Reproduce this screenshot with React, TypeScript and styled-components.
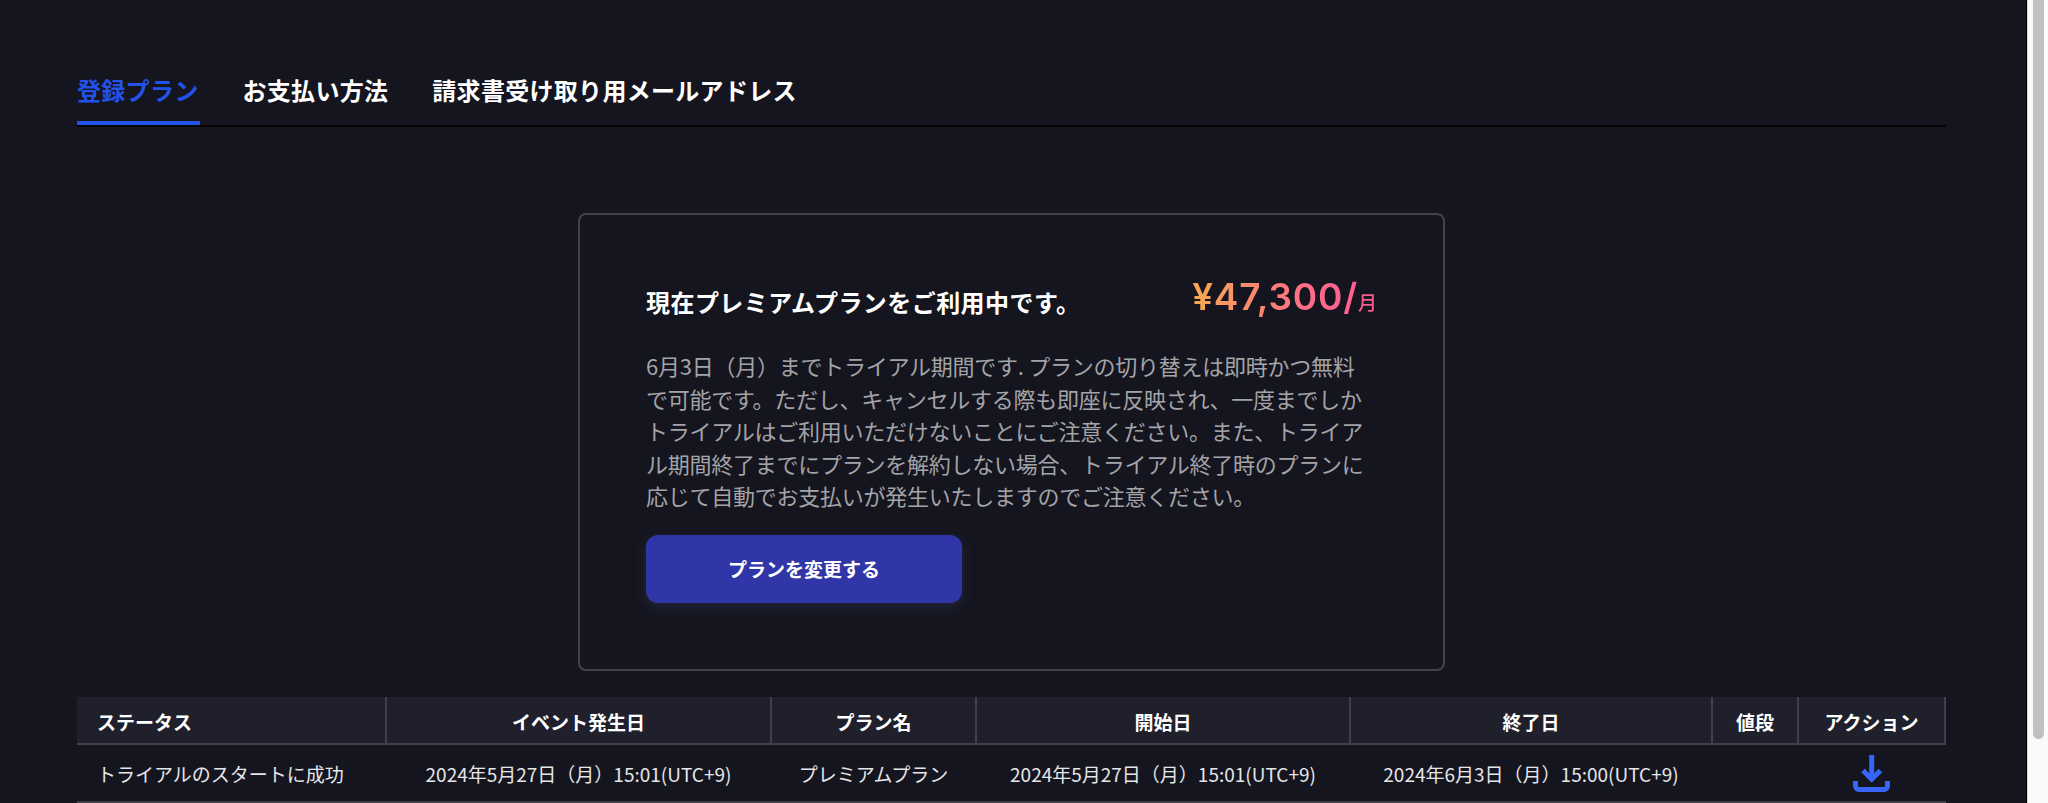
import styled, { createGlobalStyle } from "styled-components";

const GlobalStyle = createGlobalStyle`
  html, body {
    margin: 0;
    padding: 0;
    height: 100%;
    overflow: hidden;
    background: #fff;
  }
  #root {
    height: 100%;
  }
`;

const columns = [
  { label: "ステータス", width: 310, align: "left" },
  { label: "イベント発生日", width: 385, align: "center" },
  { label: "プラン名", width: 205, align: "center" },
  { label: "開始日", width: 374, align: "center" },
  { label: "終了日", width: 362, align: "center" },
  { label: "値段", width: 86, align: "center" },
  { label: "アクション", width: 147, align: "center" },
];

const row = [
  "トライアルのスタートに成功",
  "2024年5月27日（月）15:01(UTC+9)",
  "プレミアムプラン",
  "2024年5月27日（月）15:01(UTC+9)",
  "2024年6月3日（月）15:00(UTC+9)",
  "",
];

const App = () => {
  return (
    <SPage>
      <GlobalStyle />
      <SMain>
        <STabs>
          <STab $active>登録プラン</STab>
          <STab>お支払い方法</STab>
          <STab>請求書受け取り用メールアドレス</STab>
        </STabs>
        <SCardWrap>
          <SCard>
            <SCardHead>
              <STitle>現在プレミアムプランをご利用中です。</STitle>
              <SPrice>
                ¥47,300/<SUnit>月</SUnit>
              </SPrice>
            </SCardHead>
            <SBody>
              6月3日（月）までトライアル期間です. プランの切り替えは即時かつ無料
              <br />
              で可能です。ただし、キャンセルする際も即座に反映され、一度までしか
              <br />
              トライアルはご利用いただけないことにご注意ください。また、トライア
              <br />
              ル期間終了までにプランを解約しない場合、トライアル終了時のプランに
              <br />
              応じて自動でお支払いが発生いたしますのでご注意ください。
            </SBody>
            <SButton>プランを変更する</SButton>
          </SCard>
        </SCardWrap>
        <STable>
          <thead>
            <tr>
              {columns.map((c) => (
                <SHeadCell key={c.label} $width={c.width} $align={c.align}>
                  {c.label}
                </SHeadCell>
              ))}
            </tr>
          </thead>
          <tbody>
            <tr>
              {row.map((text, i) => (
                <SCell key={i} $align={columns[i].align}>
                  {text}
                </SCell>
              ))}
              <SCell $align="center">
                <SIconLink aria-label="download">
                  <svg width="37" height="37" viewBox="0 0 37 37" fill="none" stroke="#3566f8" strokeWidth="5">
                    <path d="M18.7 0V24" />
                    <path d="M10 15.5l8.7 8.7 8.7-8.7" />
                    <path d="M2.5 26v5a3.5 3.5 0 0 0 3.5 3.5h25a3.5 3.5 0 0 0 3.5-3.5v-5" />
                  </svg>
                </SIconLink>
              </SCell>
            </tr>
          </tbody>
        </STable>
      </SMain>
      <SScrollbar>
        <SThumb />
      </SScrollbar>
    </SPage>
  );
};

const SPage = styled.div`
  display: flex;
  height: 803px;
  overflow: hidden;
  background: #14151e;
  font-family: "Noto Sans CJK JP", "Noto Sans", sans-serif;
`;

const SMain = styled.main`
  flex: 1;
  min-width: 0;
  padding: 64px 80px 0 77px;
  border-right: 1px solid #000;
`;

const STabs = styled.div`
  display: flex;
  gap: 43px;
  height: 61px;
  border-bottom: 2px solid #050506;
`;

const STab = styled.div<{ $active?: boolean }>`
  height: 61px;
  box-sizing: border-box;
  padding-right: 1px;
  font-size: 24px;
  font-weight: 700;
  line-height: 52px;
  letter-spacing: 0.3px;
  color: ${(p) => (p.$active ? "#2352e8" : "#fff")};
  border-bottom: ${(p) => (p.$active ? "4px solid #2352e8" : "none")};
`;

const SCardWrap = styled.div`
  display: flex;
  justify-content: center;
  padding: 86px 0 26px;
`;

const SCard = styled.section`
  box-sizing: border-box;
  width: 867px;
  height: 458px;
  padding: 63px 66px;
  border: 2px solid #41424d;
  border-radius: 8px;
`;

const SCardHead = styled.div`
  display: flex;
  align-items: center;
  justify-content: space-between;
  height: 48px;
`;

const STitle = styled.h2`
  margin: 0 0 2px;
  font-size: 24px;
  font-weight: 700;
  letter-spacing: 0.44px;
  color: #fff;
`;

const SPrice = styled.div`
  margin-bottom: 12px;
  font-family: "Inter", "Noto Sans CJK JP", sans-serif;
  font-size: 37px;
  font-weight: 600;
  letter-spacing: 0.8px;
  background: linear-gradient(90deg, #f7a94f 0%, #ff6a8c 65%, #fb5a92 100%);
  -webkit-background-clip: text;
  background-clip: text;
  color: transparent;
`;

const SUnit = styled.span`
  font-size: 19px;
  font-weight: 500;
  letter-spacing: 0;
`;

const SBody = styled.p`
  margin: 23px 0 0;
  font-size: 22px;
  font-weight: 400;
  line-height: 32.6px;
  letter-spacing: -0.25px;
  color: #a3a3a8;
  white-space: nowrap;
`;

const SButton = styled.button`
  display: block;
  width: 316px;
  height: 68px;
  margin-top: 23px;
  border: none;
  border-radius: 12px;
  background: #3035a8;
  color: #fff;
  font-family: inherit;
  font-size: 19px;
  font-weight: 700;
  box-shadow: 0 4px 14px rgba(70, 72, 120, 0.35);
`;

const STable = styled.table`
  border-collapse: separate;
  border-spacing: 0;
  table-layout: fixed;
  width: 1869px;
  color: #fff;
`;

const SHeadCell = styled.th<{ $width: number; $align: string }>`
  box-sizing: border-box;
  width: ${(p) => p.$width}px;
  height: 48px;
  padding: 3px 20px 0;
  background: #1f202b;
  border-right: 2px solid #3f404a;
  border-bottom: 2px solid #3f404a;
  font-size: 19px;
  font-weight: 700;
  white-space: nowrap;
  text-align: ${(p) => p.$align};
`;

const SCell = styled.td<{ $align: string }>`
  height: 58px;
  padding: ${(p) => (p.$align === "center" ? "0 21px 0 19px" : "0 20px")};
  box-sizing: border-box;
  border-bottom: 2px solid #3f404a;
  font-size: 19px;
  font-weight: 400;
  color: #e6e6e8;
  white-space: nowrap;
  text-align: ${(p) => p.$align};
`;

const SIconLink = styled.span`
  display: inline-flex;
  vertical-align: middle;
`;

const SScrollbar = styled.div`
  flex: none;
  box-sizing: border-box;
  width: 21px;
  padding: 0 4px 0 5px;
  background: #fafafa;
  border-left: 1px solid #d8d8d8;
`;

const SThumb = styled.div`
  width: 11px;
  height: 739px;
  background: #c1c1c1;
  border-radius: 0 0 5.5px 5.5px;
`;

export default App;
